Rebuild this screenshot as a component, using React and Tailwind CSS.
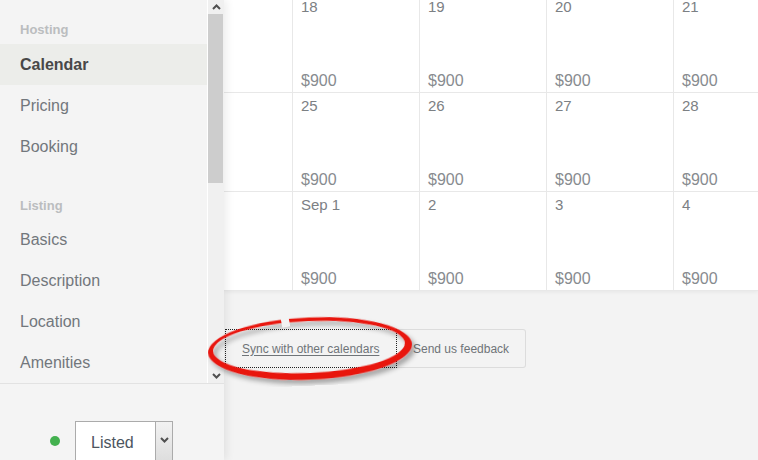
import React from 'react';

const weeks = [
  ['18', '19', '20', '21'],
  ['25', '26', '27', '28'],
  ['Sep 1', '2', '3', '4'],
];

const hostingLinks = ['Calendar', 'Pricing', 'Booking'];
const listingLinks = ['Basics', 'Description', 'Location', 'Amenities'];

const Chevron = ({ up }) => (
  <svg width="9" height="6" viewBox="0 0 9 6">
    <path
      d={up ? 'M1 5 L4.5 1.5 L8 5' : 'M1 1 L4.5 4.5 L8 1'}
      fill="none"
      stroke="#505050"
      strokeWidth="2"
    />
  </svg>
);

const NavItem = ({ label, active }) => (
  <div
    className={`h-[41px] flex items-center px-5 text-[16px] leading-5 ${
      active ? 'bg-[#ecedea] font-bold text-[#484848]' : 'text-[#72777c]'
    }`}
  >
    {label}
  </div>
);

const Sidebar = () => (
  <div className="relative z-10 w-[224px] shrink-0 flex flex-col bg-[#f4f4f4] shadow-[3px_0_8px_rgba(0,0,0,0.07)]">
    <div className="h-[386px] flex">
      {/* Nav */}
      <div className="w-[207px] pt-[22px]">
        <div className="px-5 text-[13px] leading-4 font-bold text-[#bbbdbf] mb-[6px]">Hosting</div>
        {hostingLinks.map((l, i) => (
          <NavItem key={l} label={l} active={i === 0} />
        ))}
        <div className="px-5 mt-[31px] text-[13px] leading-4 font-bold text-[#bbbdbf] mb-[5px]">Listing</div>
        {listingLinks.map((l) => (
          <NavItem key={l} label={l} />
        ))}
      </div>
      {/* Scrollbar */}
      <div className="w-[17px] border-l border-white bg-[#f0f0f0] flex flex-col">
        <div className="h-[14px] flex items-center justify-center">
          <Chevron up />
        </div>
        <div className="h-[169px] mr-px bg-[#cdcdcd]" />
        <div className="flex-1" />
        <div className="h-[14px] flex items-center justify-center">
          <Chevron />
        </div>
      </div>
    </div>
    {/* Status */}
    <div className="flex-1 border-t border-[#e2e2e2] flex items-start pt-[35px]">
      <div className="ml-[50px] mt-[17px] w-[10px] h-[10px] rounded-full bg-[#43b14f]" />
      <div className="ml-[15px] mt-[2px] w-[98px] h-[42px] bg-white border border-[#ababab] flex">
        <div className="flex-1 pl-[15px] pt-[11px] text-[16px] leading-5 text-[#4c5560]">Listed</div>
        <div className="w-[17px] border-l border-[#ababab] bg-gradient-to-b from-[#f2f2f2] to-[#dddddd] flex justify-center pt-[15px]">
          <Chevron />
        </div>
      </div>
    </div>
  </div>
);

const Calendar = () => (
  <div className="-mt-[6px] bg-white shadow-[0_1px_4px_rgba(0,0,0,0.06)]">
    {weeks.map((week, r) => (
      <div key={r} className="flex h-[99px] border-b border-[#e8e8e8]">
        <div className="w-[68px] shrink-0" />
        {week.map((d) => (
          <div
            key={d}
            className="w-[127px] shrink-0 border-l border-[#e8e8e8] flex flex-col justify-between pt-[3px] pb-[1px] px-2"
          >
            <span className="text-[15px] leading-[19px] text-[#7c8084]">{d}</span>
            <span className="text-[16px] leading-5 text-[#878b8f]">$900</span>
          </div>
        ))}
      </div>
    ))}
  </div>
);

const Annotation = () => (
  <svg className="absolute left-0 top-0 z-20 pointer-events-none" width="758" height="460" viewBox="0 0 758 460">
    <defs>
      <filter id="sh" x="-20%" y="-40%" width="140%" height="180%">
        <feDropShadow dx="3" dy="4" stdDeviation="2.5" floodColor="#000" floodOpacity="0.35" />
      </filter>
      <mask id="gap">
        <rect x="0" y="0" width="758" height="460" fill="white" />
        <rect x="282" y="310" width="8" height="16" fill="black" transform="rotate(-8 286 317)" />
      </mask>
    </defs>
    <g mask="url(#gap)" transform="rotate(-2.5 310 348)">
      <path
        filter="url(#sh)"
        fillRule="evenodd"
        fill="#e8120c"
        d="M208 348.5 a102 31 0 1 0 204 0 a102 31 0 1 0 -204 0 Z M213 347 a96 26 0 1 0 192 0 a96 26 0 1 0 -192 0 Z"
      />
    </g>
  </svg>
);

export default function App() {
  return (
    <div className="relative w-[758px] h-[460px] flex overflow-hidden bg-[#f3f3f3] font-['Liberation_Sans',Arial,sans-serif]">
      <Sidebar />
      <div className="relative flex-1 overflow-hidden">
        <Calendar />
        <div className="mt-[38px] ml-px flex text-[12px] text-[#6f7478]">
          <button className="w-[172px] h-[39px] border border-dotted border-[#222] pl-4 text-left">
            <span className="underline underline-offset-2">Sync with other calendars</span>
          </button>
          <button className="w-[129px] h-[39px] border border-l-0 border-[#dcdcdc] rounded-r-[3px] pl-4 text-left">
            Send us feedback
          </button>
        </div>
      </div>
      <Annotation />
    </div>
  );
}
